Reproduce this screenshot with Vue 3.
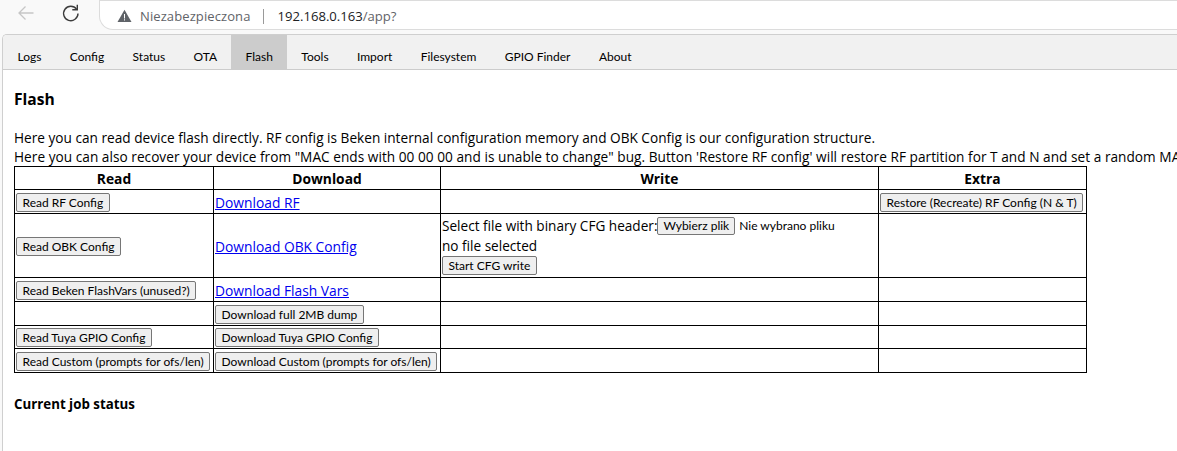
<script setup>
const tabs = ['Logs', 'Config', 'Status', 'OTA', 'Flash', 'Tools', 'Import', 'Filesystem', 'GPIO Finder', 'About']
</script>

<template>
  <div class="window">
    <header class="chrome">
      <svg class="back" width="20" height="20" viewBox="0 0 20 20"><path d="M17.5 10H3M9.5 3.5 3 10l6.5 6.5" fill="none" stroke="#c6c6c6" stroke-width="1.3"/></svg>
      <svg class="reload" width="20" height="20" viewBox="0 0 20 20"><path d="M15.6 6.2A7.2 7.2 0 1 0 17 10.500" fill="none" stroke="#3c3c3c" stroke-width="1.4"/><path d="M16.300 1.800V6.800H11.300" fill="none" stroke="#3c3c3c" stroke-width="1.400"/></svg>
      <div class="omnibox">
        <svg width="15" height="14" viewBox="0 0 15 14"><path d="M7.500 .8 14.500 13H.5Z" fill="#5f6368"/><path d="M7 5h1v4.400H7zM7 10.300h1v1.200H7z" fill="#fff"/></svg>
        <span class="insecure">Niezabezpieczona</span>
        <span class="divider"></span>
        <span class="url">192.168.0.163<span class="path">/app?</span></span>
      </div>
    </header>
    <div class="page">
      <nav class="tabs">
        <span v-for="t in tabs" :key="t" class="tab" :class="{ active: t === 'Flash' }">{{ t }}</span>
      </nav>
      <main class="content">
        <h3 class="title">Flash</h3>
        <div class="intro">Here you can read device flash directly. RF config is Beken internal configuration memory and OBK Config is our configuration structure.</div>
        <div class="intro second">Here you can also recover your device from "MAC ends with 00 00 00 and is unable to change" bug. Button 'Restore RF config' will restore RF partition for T and N and set a random MAC.</div>
        <table class="grid">
          <colgroup><col class="c1"><col class="c2"><col class="c3"><col class="c4"></colgroup>
          <thead>
            <tr><th>Read</th><th>Download</th><th>Write</th><th>Extra</th></tr>
          </thead>
          <tbody>
            <tr class="r24">
              <td><button>Read RF Config</button></td>
              <td><a href="#">Download RF</a></td>
              <td></td>
              <td><button>Restore (Recreate) RF Config (N &amp; T)</button></td>
            </tr>
            <tr>
              <td><button>Read OBK Config</button></td>
              <td><a href="#">Download OBK Config</a></td>
              <td class="write">
                <div class="line">Select file with binary CFG header:<span class="file-btn">Wybierz plik</span><span class="file-name">Nie wybrano pliku</span></div>
                <div class="line">no file selected</div>
                <div class="line"><button>Start CFG write</button></div>
              </td>
              <td></td>
            </tr>
            <tr class="r24">
              <td><button>Read Beken FlashVars (unused?)</button></td>
              <td><a href="#">Download Flash Vars</a></td>
              <td></td><td></td>
            </tr>
            <tr class="r24">
              <td></td>
              <td><button>Download full 2MB dump</button></td>
              <td></td><td></td>
            </tr>
            <tr class="r23">
              <td><button>Read Tuya GPIO Config</button></td>
              <td><button>Download Tuya GPIO Config</button></td>
              <td></td><td></td>
            </tr>
            <tr class="r24">
              <td><button>Read Custom (prompts for ofs/len)</button></td>
              <td><button>Download Custom (prompts for ofs/len)</button></td>
              <td></td><td></td>
            </tr>
          </tbody>
        </table>
        <h4 class="status">Current job status</h4>
      </main>
    </div>
  </div>
</template>

<style>
html, body { margin: 0; overflow: hidden; background: #fff; }
</style>

<style scoped>
.window {
  width: 1177px;
  height: 451px;
  overflow: hidden;
  background: #f9f9f9;
  font-family: "Open Sans", "Noto Sans", sans-serif;
  color: #000;
}
.chrome {
  height: 34px;
  box-sizing: border-box;
  display: flex;
  align-items: flex-start;
  padding-top: 3px;
}
.back { margin-left: 16px; }
.reload { margin-left: 25px; margin-top: 0; }
.omnibox {
  margin-left: 18px;
  flex: 1;
  height: 26px;
  margin-top: -3px;
  padding-top: 2px;
  background: #fff;
  border: 1px solid #dcdcdc;
  border-right: 0;
  border-radius: 0 0 0 14px;
  display: flex;
  align-items: center;
  padding-left: 17px;
  font-size: 13px;
}
.insecure { margin-left: 8px; color: #5f6368; letter-spacing: .1px; }
.divider { width: 1px; height: 15px; background: #9a9a9a; margin: 0 14px 0 12px; }
.url { color: #202124; font-size: 13.100px; }
.path { color: #5f6368; }
.page {
  margin-left: 2px;
  height: 417px;
  background: #fff;
  border-left: 1px solid #cfcfcf;
  border-top: 1px solid #cfcfcf;
  border-top-left-radius: 5px;
  overflow: hidden;
}
.tabs {
  height: 35px;
  box-sizing: border-box;
  background: #f1f1f1;
  border-bottom: 1px solid #ccc;
  display: flex;
  font-family: Lato, "Open Sans", sans-serif;
  font-size: 12px;
}
.tab {
  padding: 9px 14.200px 0;
  display: flex;
  align-items: center;
  box-sizing: border-box;
  height: 34px;
}
.tab:first-child { padding-left: 14.500px; }
.tab.active { background: #ccc; }
.content { padding: 0 0 0 11px; }
.title { margin: 19px 0 0; font-size: 15.600px; line-height: 20px; font-weight: 700; }
.intro { font-size: 13.650px; line-height: 19px; white-space: nowrap; }
.intro:first-of-type { margin-top: 19px; }
.second { letter-spacing: .03px; }
.grid {
  border-collapse: collapse;
  table-layout: fixed;
  width: 1073px;
  font-size: 13.800px;
  border: 1px solid #000;
}
.c1 { width: 199px; }
.c2 { width: 227px; }
.c3 { width: 438px; }
.c4 { width: 208px; }
th, td {
  border: 1px solid #000;
  padding: 0 1px;
  line-height: 19px;
  white-space: nowrap;
}
th { height: 22px; font-weight: 700; text-align: center; }
td { height: 20px; }
.r24 td { height: 23px; }
.r23 td { height: 22px; }
a { color: #00e; text-decoration: underline; position: relative; top: 1px; }
button {
  font-family: Lato, "Open Sans", sans-serif;
  font-size: 12px;
  line-height: 15px;
  height: 19px;
  padding: 0 5.500px;
  margin: 0;
  background: #efefef;
  border: 1px solid #767676;
  border-radius: 2px;
  color: #000;
  vertical-align: middle;
}
.write { height: 63px; font-size: 13.600px; }
.line { height: 20px; line-height: 20px; display: flex; align-items: center; }
.file-btn {
  font-family: Lato, "Open Sans", sans-serif;
  font-size: 12px;
  height: 16px;
  line-height: 15px;
  padding: 0 5px;
  background: #efefef;
  border: 1px solid #767676;
  border-radius: 2px;
}
.file-name { font-family: Lato, "Open Sans", sans-serif; font-size: 12px; margin-left: 4px; }
.status { margin: 23px 0 0; font-size: 13.300px; line-height: 16px; font-weight: 700; }
</style>
